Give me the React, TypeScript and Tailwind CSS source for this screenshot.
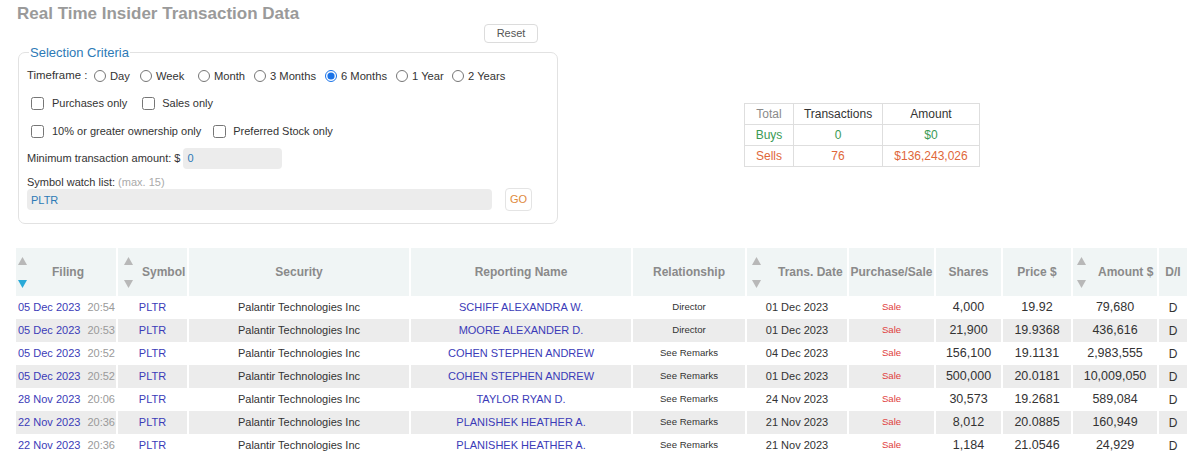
import React from 'react';

type Row = {
  date: string;
  time: string;
  name: string;
  rel: string;
  tdate: string;
  shares: string;
  price: string;
  amount: string;
};

const rows: Row[] = [
  { date: '05 Dec 2023', time: '20:54', name: 'SCHIFF ALEXANDRA W.', rel: 'Director', tdate: '01 Dec 2023', shares: '4,000', price: '19.92', amount: '79,680' },
  { date: '05 Dec 2023', time: '20:53', name: 'MOORE ALEXANDER D.', rel: 'Director', tdate: '01 Dec 2023', shares: '21,900', price: '19.9368', amount: '436,616' },
  { date: '05 Dec 2023', time: '20:52', name: 'COHEN STEPHEN ANDREW', rel: 'See Remarks', tdate: '04 Dec 2023', shares: '156,100', price: '19.1131', amount: '2,983,555' },
  { date: '05 Dec 2023', time: '20:52', name: 'COHEN STEPHEN ANDREW', rel: 'See Remarks', tdate: '01 Dec 2023', shares: '500,000', price: '20.0181', amount: '10,009,050' },
  { date: '28 Nov 2023', time: '20:06', name: 'TAYLOR RYAN D.', rel: 'See Remarks', tdate: '24 Nov 2023', shares: '30,573', price: '19.2681', amount: '589,084' },
  { date: '22 Nov 2023', time: '20:36', name: 'PLANISHEK HEATHER A.', rel: 'See Remarks', tdate: '21 Nov 2023', shares: '8,012', price: '20.0885', amount: '160,949' },
  { date: '22 Nov 2023', time: '20:36', name: 'PLANISHEK HEATHER A.', rel: 'See Remarks', tdate: '21 Nov 2023', shares: '1,184', price: '21.0546', amount: '24,929' },
];

// each option gets a fixed slot so the radios land where the original puts them
const timeframes = [
  { label: 'Day', w: 'w-[46px]' },
  { label: 'Week', w: 'w-[58px]' },
  { label: 'Month', w: 'w-[56px]' },
  { label: '3 Months', w: 'w-[71px]' },
  { label: '6 Months', w: 'w-[71px]' },
  { label: '1 Year', w: 'w-[56px]' },
  { label: '2 Years', w: 'w-auto' },
];

function SortArrows({ active }: { active?: boolean }) {
  return (
    <div className="flex h-full flex-col justify-between pt-[9px] pb-[8px]">
      <svg width="9" height="8" viewBox="0 0 9 8">
        <path d="M4.5 0L9 8H0Z" fill="#b8b8b8" />
      </svg>
      <svg width="9" height="8" viewBox="0 0 9 8">
        <path d="M0 0H9L4.5 8Z" fill={active ? '#2aaad8' : '#b8b8b8'} />
      </svg>
    </div>
  );
}

export default function App() {
  return (
    <main className="min-h-screen bg-white font-['Liberation_Sans',Arial,sans-serif] text-[#333]">
      <div className="pl-[16px]">
        <h1 className="ml-[1px] pt-[4px] text-[17px] leading-[20px] font-bold text-[#9a9a9a]">
          Real Time Insider Transaction Data
        </h1>

        <div className="flex">
          <div className="ml-[2px] w-[540px]">
            <div className="flex justify-end pr-[20px]">
              <button
                type="button"
                className="h-[19px] w-[54px] rounded-[4px] border border-[#dcdcdc] bg-white text-[11px] leading-[17px] text-[#555]"
              >
                Reset
              </button>
            </div>

            <fieldset className="mt-[2px] h-[179px] rounded-[7px] border border-[#e2e2e2] px-[8px] pt-[5px] text-[11px] text-[#333]">
              <legend className="ml-[2px] px-[1px] text-[13px] leading-[15px] text-[#2d7ab6]">Selection Criteria</legend>

              <div className="flex h-[22px] items-center">
                <span className="w-[67px] text-[11.4px]">Timeframe :</span>
                {timeframes.map((t) => (
                  <label key={t.label} className={`flex items-center ${t.w}`}>
                    <input
                      type="radio"
                      name="tf"
                      defaultChecked={t.label === '6 Months'}
                      className="m-0 h-[12px] w-[12px] accent-[#1a73e8]"
                    />
                    <span className="ml-[4px] text-[11.2px]">{t.label}</span>
                  </label>
                ))}
              </div>

              <div className="mt-[5px] flex h-[22px] items-center pl-[4px]">
                <label className="flex items-center">
                  <input type="checkbox" className="m-0 h-[13px] w-[13px]" />
                  <span className="ml-[8px]">Purchases only</span>
                </label>
                <label className="ml-[15px] flex items-center">
                  <input type="checkbox" className="m-0 h-[13px] w-[13px]" />
                  <span className="ml-[7px]">Sales only</span>
                </label>
              </div>

              <div className="mt-[6px] flex h-[22px] items-center pl-[4px]">
                <label className="flex items-center">
                  <input type="checkbox" className="m-0 h-[13px] w-[13px]" />
                  <span className="ml-[8px]">10% or greater ownership only</span>
                </label>
                <label className="ml-[12px] flex items-center">
                  <input type="checkbox" className="m-0 h-[13px] w-[13px]" />
                  <span className="ml-[7px]">Preferred Stock only</span>
                </label>
              </div>

              <div className="mt-[5px] flex h-[22px] items-center">
                <span>Minimum transaction amount: $</span>
                <input
                  type="text"
                  defaultValue="0"
                  className="ml-[3px] h-[21px] w-[99px] rounded-[4px] bg-[#ececec] px-[4px] text-[11px] text-[#2d7ab6] outline-none"
                />
              </div>

              <div className="mt-[7px] text-[11px] leading-[12px]">
                Symbol watch list: <span className="text-[#aaa]">(max. 15)</span>
              </div>
              <div className="flex items-center">
                <input
                  type="text"
                  defaultValue="PLTR"
                  className="h-[21px] w-[465px] rounded-[4px] bg-[#ececec] px-[4px] text-[11px] text-[#2d7ab6] outline-none"
                />
                <button
                  type="button"
                  className="ml-[13px] h-[23px] w-[27px] rounded-[4px] border border-[#e4e4e4] bg-white text-[11px] text-[#e08a3c]"
                >
                  GO
                </button>
              </div>
            </fieldset>
          </div>

          <div className="mt-[79px] ml-[186px]">
            <table className="border-collapse text-[12px]">
              <tbody>
                <tr className="h-[21px]">
                  <td className="w-[49px] border border-[#dedede] text-center text-[#8a8a8a]">Total</td>
                  <td className="w-[89px] border border-[#dedede] text-center">Transactions</td>
                  <td className="w-[97px] border border-[#dedede] text-center">Amount</td>
                </tr>
                <tr className="h-[21px] text-[#3a9a55]">
                  <td className="border border-[#dedede] text-center">Buys</td>
                  <td className="border border-[#dedede] text-center">0</td>
                  <td className="border border-[#dedede] text-center">$0</td>
                </tr>
                <tr className="h-[21px] text-[#e0673a]">
                  <td className="border border-[#dedede] text-center">Sells</td>
                  <td className="border border-[#dedede] text-center">76</td>
                  <td className="border border-[#dedede] text-center">$136,243,026</td>
                </tr>
              </tbody>
            </table>
          </div>
        </div>

        <table className="mt-[24px] w-[1171px] table-fixed border-collapse">
          <colgroup>
            <col className="w-[101px]" />
            <col className="w-[71px]" />
            <col className="w-[222px]" />
            <col className="w-[222px]" />
            <col className="w-[114px]" />
            <col className="w-[102px]" />
            <col className="w-[87px]" />
            <col className="w-[67px]" />
            <col className="w-[70px]" />
            <col className="w-[86px]" />
            <col className="w-[29px]" />
          </colgroup>
          <thead>
            <tr className="h-[48px] bg-[#f0f5f5] text-[12px] font-bold text-[#8a8a8a]">
              <th className="p-0 font-bold">
                <div className="flex h-[48px] items-center">
                  <div className="ml-[2px] h-full">
                    <SortArrows active />
                  </div>
                  <span className="ml-[25px]">Filing</span>
                </div>
              </th>
              <th className="border-l-2 border-white p-0 font-bold">
                <div className="flex h-[48px] items-center">
                  <div className="ml-[6px] h-full">
                    <SortArrows />
                  </div>
                  <span className="ml-[9px]">Symbol</span>
                </div>
              </th>
              <th className="border-l-2 border-white p-0 text-center font-bold">Security</th>
              <th className="border-l-2 border-white p-0 text-center font-bold">Reporting Name</th>
              <th className="border-l-2 border-white p-0 text-center font-bold">Relationship</th>
              <th className="border-l-2 border-white p-0 font-bold">
                <div className="flex h-[48px] items-center">
                  <div className="ml-[5px] h-full">
                    <SortArrows />
                  </div>
                  <span className="ml-[17px]">Trans. Date</span>
                </div>
              </th>
              <th className="border-l-2 border-white p-0 text-center font-bold whitespace-nowrap">Purchase/Sale</th>
              <th className="border-l-2 border-white p-0 text-center font-bold">Shares</th>
              <th className="border-l-2 border-white p-0 text-center font-bold">Price $</th>
              <th className="border-l-2 border-white p-0 font-bold">
                <div className="flex h-[48px] items-center">
                  <div className="ml-[4px] h-full">
                    <SortArrows />
                  </div>
                  <span className="ml-[12px] whitespace-nowrap">Amount $</span>
                </div>
              </th>
              <th className="border-l-2 border-white p-0 text-center font-bold">D/I</th>
            </tr>
          </thead>
          <tbody>
            {rows.map((r, i) => (
              <tr key={i} className={`h-[23px] ${i % 2 === 1 ? 'bg-[#ececec]' : 'bg-white'}`}>
                <td className="p-0 pl-[2px] text-[11px] whitespace-nowrap">
                  <span className="text-[#3b3bb8]">{r.date}</span>
                  <span className="ml-[7px] text-[#9a9a9a]">{r.time}</span>
                </td>
                <td className="border-l-2 border-white p-0 text-center text-[11px] text-[#3b3bb8]">PLTR</td>
                <td className="border-l-2 border-white p-0 text-center text-[11px] text-[#333]">Palantir Technologies Inc</td>
                <td className="border-l-2 border-white p-0 text-center text-[11px] text-[#3b3bb8]">{r.name}</td>
                <td className="border-l-2 border-white p-0 text-center text-[9.6px] text-[#333]">{r.rel}</td>
                <td className="border-l-2 border-white p-0 text-center text-[11px] text-[#333]">{r.tdate}</td>
                <td className="border-l-2 border-white p-0 text-center text-[9.6px] text-[#e03c3c]">Sale</td>
                <td className="border-l-2 border-white p-0 text-center text-[12.5px] text-[#333]">{r.shares}</td>
                <td className="border-l-2 border-white p-0 text-center text-[12.5px] text-[#333]">{r.price}</td>
                <td className="border-l-2 border-white p-0 text-center text-[12.5px] text-[#333]">{r.amount}</td>
                <td className="border-l-2 border-white p-0 text-center text-[12px] text-[#333]">D</td>
              </tr>
            ))}
          </tbody>
        </table>
      </div>
    </main>
  );
}
